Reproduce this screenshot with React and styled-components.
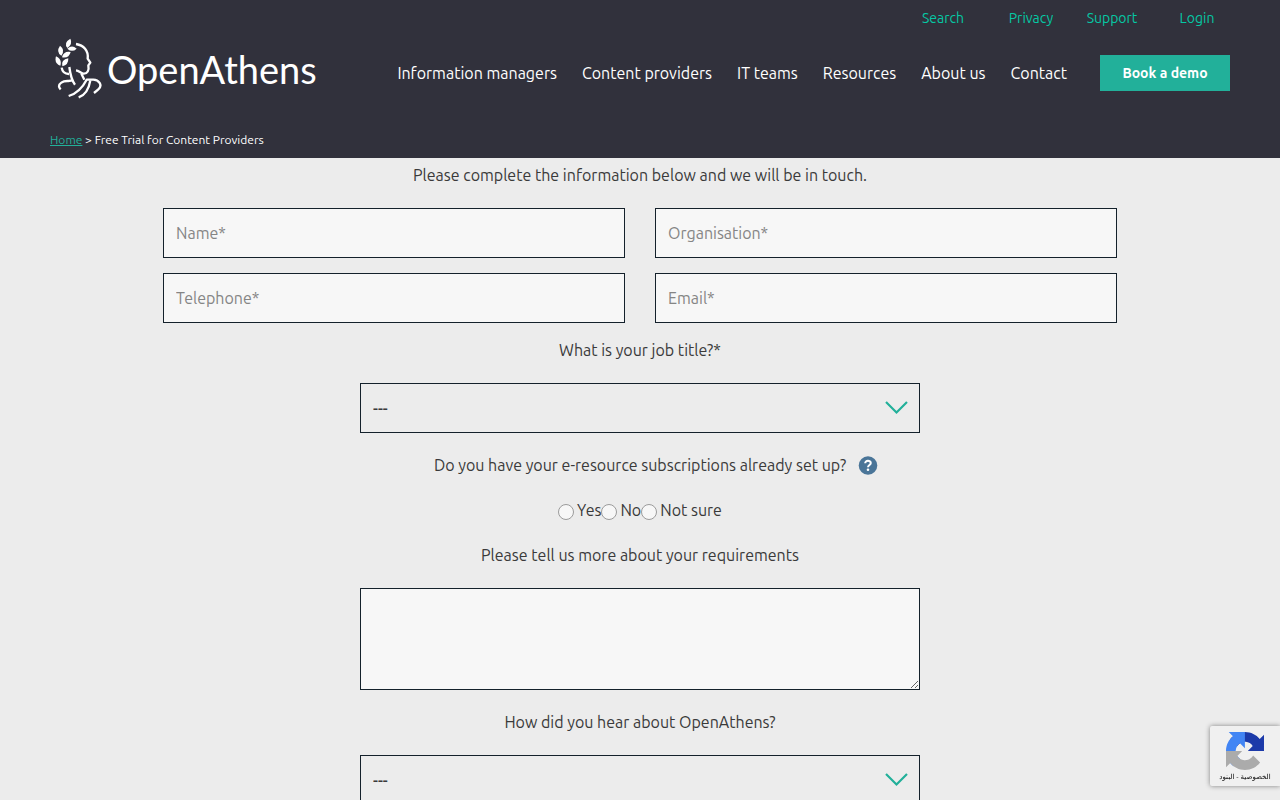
import styled, { createGlobalStyle } from "styled-components";

const GlobalStyle = createGlobalStyle`
  * {
    box-sizing: border-box;
  }
  body {
    margin: 0;
    background: #ececec;
    color: #3a3a3a;
    font-family: Ubuntu, "Noto Sans", sans-serif;
    font-size: 16px;
    line-height: 24px;
  }
  input, select, textarea, button {
    font: inherit;
    color: inherit;
  }
`;

const Header = styled.header`
  background: #31313c;
  color: #fff;
  padding: 0 50px;
  height: 158px;
  display: flex;
  flex-direction: column;
`;

const TopLinks = styled.nav`
  display: grid;
  grid-template-columns: 88px 88px 74px 96px;
  justify-content: end;
  margin-right: -15px;
  height: 36px;
  align-items: center;
  text-align: center;
  font-size: 14px;

  a {
    color: #05c8a4;
    text-decoration: none;
  }
`;

const MainBar = styled.div`
  display: flex;
  align-items: center;
  justify-content: space-between;
  height: 74px;
`;

const Brand = styled.a`
  display: flex;
  align-items: center;
  gap: 4px;
  padding: 0 0 8px 5px;
  color: #fff;
  text-decoration: none;
`;

const BrandName = styled.span`
  font-family: Lato, sans-serif;
  font-size: 38px;
  line-height: 48px;
`;

const MainNav = styled.nav`
  display: flex;
  align-items: center;
  gap: 25px;

  a {
    color: #fff;
    text-decoration: none;
    white-space: nowrap;
  }
`;

const DemoButton = styled.button`
  width: 130px;
  height: 36px;
  margin-left: 8px;
  padding: 0;
  border: 0;
  background: #22b09a;
  color: #fff;
  font-size: 14px;
  font-weight: 700;
`;

const Breadcrumb = styled.div`
  margin-top: 20px;
  font-size: 12px;
  line-height: 20px;

  a {
    color: #22b09a;
  }
`;

const Form = styled.form`
  max-width: 954px;
  margin: 0 auto;
  padding: 5px 0 20px;
  display: flex;
  flex-direction: column;
  align-items: center;
  gap: 21px;
`;

const Line = styled.p`
  margin: 0;
`;

const Fields = styled.div`
  align-self: stretch;
  display: grid;
  grid-template-columns: 1fr 1fr;
  gap: 15px 30px;
  margin-bottom: -6px;
`;

const TextInput = styled.input`
  width: 100%;
  height: 50px;
  padding: 0 12px;
  border: 1px solid #14212b;
  border-radius: 0;
  background: #f7f7f7;

  &::placeholder {
    color: #858585;
    opacity: 1;
  }
`;

const SelectBox = styled.div`
  width: 100%;
  max-width: 560px;
  margin-bottom: -1px;
  display: grid;
  align-items: center;

  > * {
    grid-area: 1 / 1;
  }
  svg {
    justify-self: end;
    margin-right: 12px;
    pointer-events: none;
  }
`;

const Select = styled.select`
  appearance: none;
  width: 100%;
  height: 50px;
  padding: 0 12px;
  border: 1px solid #14212b;
  border-radius: 0;
  background: transparent;
  font-weight: 500;
`;

const Question = styled.div`
  display: flex;
  align-items: center;
  gap: 12px;
  padding-left: 32px;
`;

const HelpButton = styled.button`
  display: flex;
  padding: 0;
  border: 0;
  background: none;
`;

const Radios = styled.div`
  display: flex;
  align-items: center;

  label {
    display: flex;
    align-items: center;
    gap: 3px;
  }
`;

const Radio = styled.input`
  appearance: none;
  width: 16px;
  height: 16px;
  margin: 4px 0 0;
  border: 1px solid #9b9b9b;
  border-radius: 50%;
  background: #f7f7f7;
`;

const TextArea = styled.textarea`
  display: block;
  width: 100%;
  max-width: 560px;
  height: 102px;
  margin-bottom: -1px;
  padding: 12px;
  border: 1px solid #14212b;
  border-radius: 0;
  background: #f7f7f7;
`;

const Captcha = styled.aside`
  position: fixed;
  right: 0;
  bottom: 14px;
  width: 70px;
  height: 60px;
  padding-top: 6px;
  display: flex;
  flex-direction: column;
  align-items: center;
  border-radius: 2px 0 0 2px;
  background: #f0f0f0;
  box-shadow: 0 0 5px gray;
`;

const CaptchaLinks = styled.div`
  direction: rtl;
  font-family: "Liberation Sans", "DejaVu Sans", sans-serif;
  font-size: 7px;
  line-height: 14px;
  white-space: nowrap;

  a {
    color: #000;
    text-decoration: none;
  }
`;

function BrandMark() {
  return (
    <svg width="48" height="62" viewBox="45 24 144 186" aria-hidden="true">
      <g fill="#fff">
        <path d="M91 26Q99 42 82 54Q70 38 91 26Z" />
        <path d="M82 56Q96 43 110 56Q96 69 82 56Z" />
        <path d="M60 47Q77 60 64 77Q47 66 60 47Z" />
        <path d="M92 66Q87 86 66 82Q71 62 92 66Z" />
        <path d="M48 79Q67 88 61 107Q42 100 48 79Z" />
        <path d="M85 85Q86 105 67 109Q62 89 85 85Z" />
      </g>
      <g fill="none" stroke="#fff" strokeWidth="7" strokeLinejoin="round">
        <path d="M108 42C131 46 146 62 143 86L151 98L145 106C148 121 142 132 130 131C122 130 117 122 108 121" />
        <path d="M124 131L133 149" />
        <path d="M65 113C67 126 75 132 87 132" />
        <path d="M88 111C91 135 94 150 105 164" />
        <path d="M99 150C87 157 77 148 64 158C54 165 56 172 62 178" />
        <path d="M86 198C112 190 127 174 140 149H158C177 148 189 166 175 178L162 189" />
        <path d="M151 151C147 175 137 195 116 202" />
      </g>
    </svg>
  );
}

function Chevron() {
  return (
    <svg width="24" height="16" viewBox="0 0 24 16" aria-hidden="true">
      <path d="M2 2L12.500 12.500L23 2" fill="none" stroke="#22b09a" strokeWidth="2.2" />
    </svg>
  );
}

function HelpIcon() {
  return (
    <svg width="20" height="20" viewBox="0 0 20 20" aria-hidden="true">
      <circle cx="10" cy="10.500" r="9.3" fill="#4a7598" />
      <path
        d="M7.200 8.300C7 5.100 12.800 5 12.800 8.100C12.800 10.100 10 10 10 12.300"
        fill="none"
        stroke="#fff"
        strokeWidth="2"
      />
      <circle cx="10" cy="14.800" r="1.3" fill="#fff" />
    </svg>
  );
}

function CaptchaLogo() {
  return (
    <svg width="38" height="38" viewBox="0 0 64 64" aria-hidden="true">
      <path
        fill="#1c3aa9"
        d="M64 31.955l-.033-1.37V4.687l-7.16 7.16C50.948 4.674 42.033.093 32.05.093c-10.39 0-19.622 4.96-25.458 12.64l11.736 11.86a15.55 15.55 0 0 1 4.754-5.334c2.05-1.6 4.952-2.906 8.968-2.906.485 0 .86.057 1.135.163 4.976.393 9.288 3.14 11.828 7.124l-8.307 8.307L64 31.953"
      />
      <path
        fill="#4285f4"
        d="M31.862.094l-1.37.033H4.594l7.16 7.16C4.58 13.147 0 22.06 0 32.046c0 10.39 4.96 19.622 12.64 25.458L24.5 45.768a15.55 15.55 0 0 1-5.334-4.754c-1.6-2.05-2.906-4.952-2.906-8.968 0-.485.057-.86.163-1.135.393-4.976 3.14-9.288 7.124-11.828l8.307 8.307L31.86.095"
      />
      <path
        fill="#ababab"
        d="M.001 32.045l.033 1.37v25.898l7.16-7.16c5.86 7.173 14.774 11.754 24.76 11.754 10.39 0 19.622-4.96 25.458-12.64l-11.736-11.86a15.55 15.55 0 0 1-4.754 5.334c-2.05 1.6-4.952 2.906-8.968 2.906-.485 0-.86-.057-1.135-.163-4.976-.393-9.288-3.14-11.828-7.124l8.307-8.307c-10.522.04-22.4.066-27.295-.005"
      />
    </svg>
  );
}

function DropDown({ id }) {
  return (
    <SelectBox>
      <Select id={id}>
        <option>---</option>
      </Select>
      <Chevron />
    </SelectBox>
  );
}

const topLinks = ["Search", "Privacy", "Support", "Login"];
const navLinks = [
  "Information managers",
  "Content providers",
  "IT teams",
  "Resources",
  "About us",
  "Contact",
];
const fields = [
  { name: "Name", type: "text" },
  { name: "Organisation", type: "text" },
  { name: "Telephone", type: "tel" },
  { name: "Email", type: "email" },
];

export default function App() {
  return (
    <>
      <GlobalStyle />
      <Header>
        <TopLinks>
          {topLinks.map((name) => (
            <a href="#" key={name}>{name}</a>
          ))}
        </TopLinks>
        <MainBar>
          <Brand href="#">
            <BrandMark />
            <BrandName>OpenAthens</BrandName>
          </Brand>
          <MainNav>
            {navLinks.map((name) => (
              <a href="#" key={name}>{name}</a>
            ))}
            <DemoButton>Book a demo</DemoButton>
          </MainNav>
        </MainBar>
        <Breadcrumb>
          <a href="#">Home</a> &gt; Free Trial for Content Providers
        </Breadcrumb>
      </Header>
      <Form>
        <Line>Please complete the information below and we will be in touch.</Line>
        <Fields>
          {fields.map(({ name, type }) => (
            <TextInput key={name} type={type} aria-label={name} placeholder={name + "*"} />
          ))}
        </Fields>
        <label htmlFor="job">What is your job title?*</label>
        <DropDown id="job" />
        <Question>
          <span id="subs">Do you have your e-resource subscriptions already set up?</span>
          <HelpButton type="button" aria-label="Help">
            <HelpIcon />
          </HelpButton>
        </Question>
        <Radios role="radiogroup" aria-labelledby="subs">
          {["Yes", "No", "Not sure"].map((answer) => (
            <label key={answer}>
              <Radio type="radio" name="subs" />
              {answer}
            </label>
          ))}
        </Radios>
        <label htmlFor="more">Please tell us more about your requirements</label>
        <TextArea id="more" />
        <label htmlFor="heard">How did you hear about OpenAthens?</label>
        <DropDown id="heard" />
      </Form>
      <Captcha>
        <CaptchaLogo />
        <CaptchaLinks>
          <a href="#">الخصوصية</a> - <a href="#">البنود</a>
        </CaptchaLinks>
      </Captcha>
    </>
  );
}
